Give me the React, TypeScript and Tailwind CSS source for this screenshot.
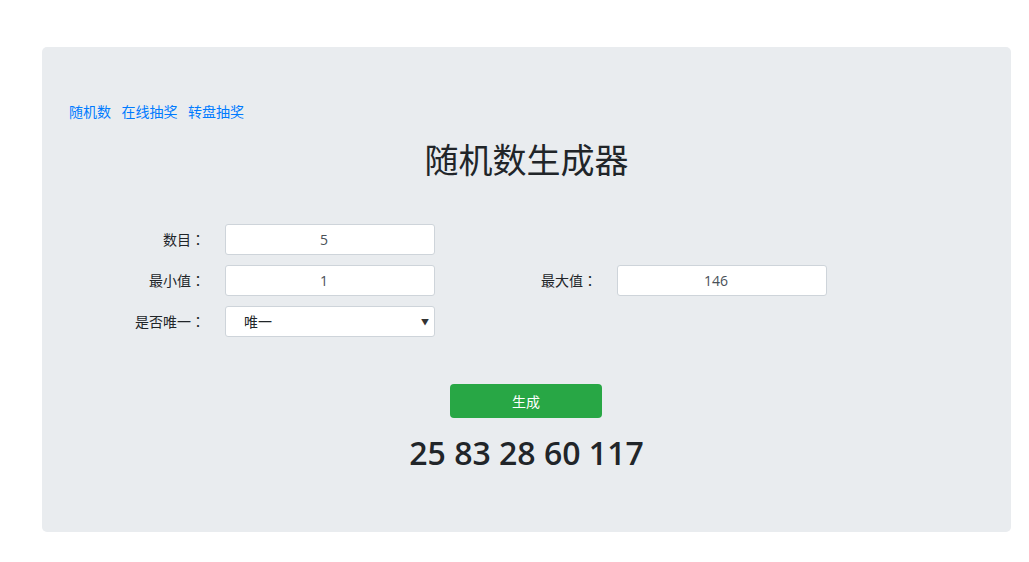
import { useState } from 'react';

const FONT = "font-['Open_Sans','Noto_Sans_CJK_SC',sans-serif]";

// 顶部导航链接
const NAV_LINKS = ['随机数', '在线抽奖', '转盘抽奖'];

// 标签 (全角冒号居中显示)
const Label = ({ text }: { text: string }) => (
  <label className="text-right">
    {text}
    <span className="font-['Noto_Sans_CJK_JP',sans-serif]">：</span>
  </label>
);

export default function App() {
  const [count, setCount] = useState('5');
  const [min, setMin] = useState('1');
  const [max, setMax] = useState('146');
  const [unique, setUnique] = useState('唯一');
  const [result] = useState('25 83 28 60 117');

  const inputCls =
    'h-[31px] w-[210px] rounded-[3px] border border-[#ced4da] bg-white pl-2 pr-[20px] text-center text-[14px] text-[#495057] outline-none';

  return (
    <div className={`min-h-[562px] w-[1029px] bg-white pt-[47px] ${FONT}`}>
      {/* jumbotron */}
      <div className="ml-[42px] flex h-[485px] w-[969px] flex-col rounded-[5px] bg-[#e9ecef] pt-[54px]">
        {/* 导航 */}
        <div className="flex h-[21px] items-center gap-[10.5px] pl-[27px] text-[14px] leading-[21px] text-[#007bff]">
          {NAV_LINKS.map((l) => (
            <a key={l} href="#" className="hover:underline">
              {l}
            </a>
          ))}
        </div>

        {/* 标题 */}
        <h1 className="mt-[18px] h-[41px] text-center text-[34px] font-normal leading-[41px] text-[#212529]">
          随机数生成器
        </h1>

        {/* 表单 */}
        <div className="mt-[43px] ml-[43px] grid grid-cols-[120px_210px_142px_210px] items-center gap-x-5 gap-y-[10px] text-[14px] text-[#212529]">
          <Label text="数目" />
          <input className={inputCls} value={count} onChange={(e) => setCount(e.target.value)} />
          <div />
          <div />

          <Label text="最小值" />
          <input className={inputCls} value={min} onChange={(e) => setMin(e.target.value)} />
          <Label text="最大值" />
          <input className={inputCls} value={max} onChange={(e) => setMax(e.target.value)} />

          <Label text="是否唯一" />
          <div className="relative h-[31px] w-[210px]">
            <select
              className="h-full w-full appearance-none rounded-[3px] border border-[#ced4da] bg-white pl-[18px] text-[14px] text-[#212529] outline-none"
              value={unique}
              onChange={(e) => setUnique(e.target.value)}
            >
              <option>唯一</option>
              <option>不唯一</option>
            </select>
            <span className="pointer-events-none absolute right-[6px] top-1/2 -translate-y-1/2 text-[8px] text-[#333]">
              ▼
            </span>
          </div>
          <div />
          <div />
        </div>

        {/* 生成按钮 */}
        <div className="mt-[47px] flex justify-center">
          <button
            type="button"
            className="ml-[-1px] h-[34px] w-[152px] rounded-[4px] bg-[#28a745] text-[14px] text-white"
          >
            生成
          </button>
        </div>

        {/* 结果 */}
        <div className="mt-[16px] text-center text-[32px] font-semibold leading-[38px] text-[#212529]">
          {result}
        </div>
      </div>
    </div>
  );
}
